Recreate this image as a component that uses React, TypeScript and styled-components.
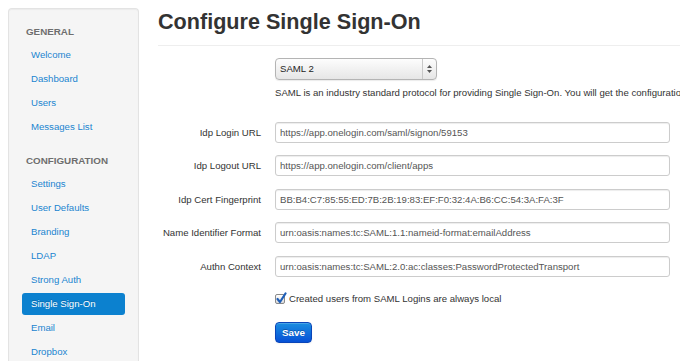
import styled, {createGlobalStyle} from "styled-components";

const GlobalStyle = createGlobalStyle`
	html, body {
		margin: 0;
		padding: 0;
		background: #fff;
		overflow: hidden;
	}
	body {
		font-family: "Liberation Sans", Arial, Helvetica, sans-serif;
		color: #333;
	}
`;

const Page = styled.div`
	display: flex;
	align-items: stretch;
	padding: 8px 0 0 8px;
	height: 353px;
	width: 672px;
	overflow: hidden;
`;

const Sidebar = styled.nav`
	box-sizing: border-box;
	width: 131px;
	flex-shrink: 0;
	background: #f5f5f5;
	border: 1px solid #e3e3e3;
	border-bottom: 0;
	border-radius: 4px 4px 0 0;
	padding: 12px 13px 0 13px;
	box-shadow: inset 0 1px 1px rgba(0, 0, 0, 0.04);
`;

const NavGroup = styled.div<{$spaced?: boolean}>`
	display: flex;
	flex-direction: column;
	margin-top: ${p => (p.$spaced ? "10px" : "0")};
`;

const NavHeader = styled.div`
	height: 22px;
	line-height: 22px;
	padding-left: 4px;
	margin-bottom: 1px;
	font-size: 9.8px;
	font-weight: bold;
	color: #6e6e6e;
	text-shadow: 0 1px 0 rgba(255, 255, 255, 0.5);
`;

const NavLink = styled.a<{$active?: boolean}>`
	display: block;
	height: 22px;
	line-height: 22px;
	padding-left: 9px;
	margin-bottom: 2px;
	border-radius: 3px;
	font-size: 9.6px;
	text-decoration: none;
	color: ${p => (p.$active ? "#fff" : "#1a84cf")};
	background: ${p => (p.$active ? "#0c81cf" : "transparent")};
	text-shadow: ${p => (p.$active ? "0 -1px 0 rgba(0,0,0,0.2)" : "0 1px 0 rgba(255,255,255,0.5)")};
`;

const Main = styled.main`
	flex: 1;
	margin-left: 19px;
	min-width: 0;
	overflow: hidden;
`;

const Title = styled.h1`
	margin: 0 0 9px 0;
	height: 28px;
	line-height: 28px;
	font-size: 21.6px;
	font-weight: bold;
	color: #333;
`;

const Rule = styled.hr`
	margin: 0 0 12px 0;
	border: 0;
	border-top: 1px solid #eeeeee;
	height: 0;
`;

const Form = styled.form`
	display: grid;
	grid-template-columns: 103px 395px;
	column-gap: 14px;
	row-gap: 12.5px;
	align-items: center;
`;

const Label = styled.label`
	grid-column: 1;
	text-align: right;
	font-size: 9.6px;
	color: #333;
`;

const Control = styled.div`
	grid-column: 2;
	display: flex;
	flex-direction: column;
	align-items: flex-start;
`;

const SelectBox = styled.div`
	box-sizing: border-box;
	position: relative;
	width: 162px;
	height: 22px;
	border: 1px solid #b4b4b4;
	border-radius: 4px;
	background: linear-gradient(#fdfdfd, #e6e6e6);
	box-shadow: 0 1px 1px rgba(0, 0, 0, 0.08);
	font-size: 9.6px;
	line-height: 20px;
	padding-left: 4px;
	color: #222;
`;

const SelectArrows = styled.span`
	position: absolute;
	right: 0;
	top: 0;
	bottom: 0;
	width: 13px;
	border-left: 1px solid #c8c8c8;
	display: flex;
	align-items: center;
	justify-content: center;
`;

const Help = styled.p`
	margin: 6px 0 9px 0;
	font-size: 9.6px;
	line-height: 14px;
	white-space: nowrap;
	color: #333;
`;

const Input = styled.input`
	box-sizing: border-box;
	width: 395px;
	height: 21px;
	padding: 0 4px;
	border: 1px solid #cccccc;
	border-radius: 3px;
	box-shadow: inset 0 1px 1px rgba(0, 0, 0, 0.075);
	font-family: "Liberation Sans", Arial, sans-serif;
	font-size: 9.6px;
	color: #555;
	background: #fff;
	outline: none;
`;

const CheckRow = styled.label`
	display: flex;
	align-items: center;
	gap: 4px;
	font-size: 9.6px;
	color: #333;
	margin-top: 4px;
`;

const CheckBox = styled.span`
	position: relative;
	box-sizing: border-box;
	width: 10px;
	height: 10px;
	border: 1px solid #8a8a8a;
	border-radius: 2px;
	background: linear-gradient(#ffffff, #dcdcdc);

	svg {
		position: absolute;
		left: 0;
		top: -3px;
	}
`;

const SaveButton = styled.button`
	box-sizing: border-box;
	width: 37px;
	height: 21px;
	margin-top: 18px;
	padding: 0;
	border: 1px solid #0a45b8;
	border-radius: 4px;
	background: linear-gradient(#1a8ee0, #0650d6);
	box-shadow: inset 0 1px 0 rgba(255, 255, 255, 0.2), 0 1px 2px rgba(0, 0, 0, 0.05);
	color: #fff;
	font-family: "Liberation Sans", Arial, sans-serif;
	font-size: 9.8px;
	font-weight: bold;
	text-shadow: 0 -1px 0 rgba(0, 0, 0, 0.25);
	cursor: pointer;
`;

const general = ["Welcome", "Dashboard", "Users", "Messages List"];
const configuration = ["Settings", "User Defaults", "Branding", "LDAP", "Strong Auth", "Single Sign-On", "Email", "Dropbox"];

const fields = [
	{label: "Idp Login URL", value: "https://app.onelogin.com/saml/signon/59153"},
	{label: "Idp Logout URL", value: "https://app.onelogin.com/client/apps"},
	{label: "Idp Cert Fingerprint", value: "BB:B4:C7:85:55:ED:7B:2B:19:83:EF:F0:32:4A:B6:CC:54:3A:FA:3F"},
	{label: "Name Identifier Format", value: "urn:oasis:names:tc:SAML:1.1:nameid-format:emailAddress"},
	{label: "Authn Context", value: "urn:oasis:names:tc:SAML:2.0:ac:classes:PasswordProtectedTransport"},
];

export default function App() {
	return (
		<>
			<GlobalStyle/>
			<Page>
				<Sidebar>
					<NavGroup>
						<NavHeader>GENERAL</NavHeader>
						{general.map(item => <NavLink key={item} href="#">{item}</NavLink>)}
					</NavGroup>
					<NavGroup $spaced>
						<NavHeader>CONFIGURATION</NavHeader>
						{configuration.map(item => (
							<NavLink key={item} href="#" $active={item === "Single Sign-On"}>{item}</NavLink>
						))}
					</NavGroup>
				</Sidebar>
				<Main>
					<Title>Configure Single Sign-On</Title>
					<Rule/>
					<Form onSubmit={e => e.preventDefault()}>
						<Control>
							<SelectBox>
								SAML 2
								<SelectArrows>
									<svg width="5" height="8" viewBox="0 0 5 8">
										<path d="M2.5 0 L5 3 L0 3 Z" fill="#555"/>
										<path d="M2.5 8 L5 5 L0 5 Z" fill="#555"/>
									</svg>
								</SelectArrows>
							</SelectBox>
							<Help>SAML is an industry standard protocol for providing Single Sign-On. You will get the configuration details from your identity provider.</Help>
						</Control>
						{fields.map(f => (
							<>
								<Label key={f.label + "-l"}>{f.label}</Label>
								<Control key={f.label + "-c"}>
									<Input defaultValue={f.value}/>
								</Control>
							</>
						))}
						<Control>
							<CheckRow>
								<CheckBox>
									<svg width="11" height="12" viewBox="0 0 11 12">
										<path d="M1.5 7 L4 10 L9.5 1.5" fill="none" stroke="#1f5fb8" strokeWidth="2.2" strokeLinecap="round" strokeLinejoin="round"/>
									</svg>
								</CheckBox>
								Created users from SAML Logins are always local
							</CheckRow>
							<SaveButton type="submit">Save</SaveButton>
						</Control>
					</Form>
				</Main>
			</Page>
		</>
	);
}
